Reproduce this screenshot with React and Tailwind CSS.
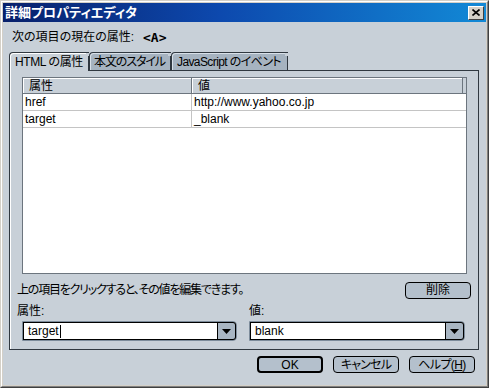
import React from 'react'

const rows = [
  { name: 'href', value: 'http://www.yahoo.co.jp' },
  { name: 'target', value: '_blank' },
]

const Caret = () => (
  <svg width="9" height="5" viewBox="0 0 9 5">
    <path d="M0 0h9L4.5 5z" fill="#000" />
  </svg>
)

const Combo = ({ value, cursor, className }) => (
  <div className={`flex h-[20px] rounded-r-[4px] border border-[#7d8c9b] bg-[#c8d0d8] ${className}`}>
    <div className="flex-1 flex items-center bg-white border border-black pl-[4px] text-[12px] leading-none">
      {value}
      {cursor && <span className="w-px h-[13px] bg-black ml-px" />}
    </div>
    <div className="w-[18px] flex items-center justify-center bg-[#a9b6c3] border-y border-r border-black rounded-r-[3px]">
      <Caret />
    </div>
  </div>
)

const Button = ({ children, primary, className = '' }) => (
  <button
    className={`h-[17px] w-[66px] rounded-[4px] bg-[#b4c0cc] text-[12px] leading-none flex items-center justify-center whitespace-nowrap ${
      primary ? 'border-2 border-black' : 'border border-black'
    } ${className}`}
  >
    {children}
  </button>
)

const Tab = ({ label, active, width, className = '' }) => (
  <div
    className={`relative flex items-center text-[12px] leading-none whitespace-nowrap rounded-tl-[4px] border-l border-t border-[#303840] ${width} ${className} ${
      active
        ? 'bg-[#c8d0d8] z-10 h-[19px] -mb-px shadow-[inset_1px_1px_0_#ffffff]'
        : 'bg-[#a6b3c0] h-[18px] shadow-[inset_1px_1px_0_#d8e0e8]'
    }`}
  >
    {label}
    <div className="absolute right-0 top-[3px] bottom-0 w-px bg-[#303840]" />
    <div className="absolute right-0 top-0 w-[3px] h-[3px] bg-[#c8d0d8]" />
  </div>
)

export default function App() {
  return (
    <div className="w-[489px] h-[388px] border border-t-[#d4d0c8] border-l-[#d4d0c8] border-r-[#404040] border-b-[#404040] bg-[#d4d0c8] font-['Liberation_Sans','Noto_Sans_CJK_JP',sans-serif] [font-feature-settings:'palt'] text-black">
      <div className="h-full flex flex-col border border-t-white border-l-white border-r-[#808080] border-b-[#808080] p-px">
        {/* Title bar */}
        <div className="h-[19px] shrink-0 flex items-center justify-between pl-[2px] pr-[2px] bg-[linear-gradient(90deg,#08206b_0%,#0d49ae_45%,#1289d6_100%)]">
          <span className="text-white text-[13px] font-bold leading-none">詳細プロパティエディタ</span>
          <div className="w-[16px] h-[14px] bg-[#d4d0c8] border border-t-white border-l-white border-r-[#404040] border-b-[#404040] flex items-center justify-center">
            <svg width="8" height="7" viewBox="0 0 8 7">
              <path d="M0.5 0.5l7 6M7.5 0.5l-7 6" stroke="#000" strokeWidth="1.6" />
            </svg>
          </div>
        </div>

        {/* Body */}
        <div className="flex-1 flex flex-col bg-[#c8d0d8]">
          <div className="h-[14px] mt-[8px] ml-[9px] flex items-center text-[12px] leading-none">
            <span>次の項目の現在の属性:</span>
            <span className="ml-[9px] font-['DejaVu_Sans_Mono',monospace] font-bold text-[13px]">&lt;A&gt;</span>
          </div>

          <div className="mt-[8px] ml-[6px] flex items-end">
            <Tab label="HTML の属性" active width="w-[80px]" className="pl-[5px] tracking-[-0.4px]" />
            <Tab label="本文のスタイル" width="w-[82px]" className="pl-[4px] tracking-[-1.1px]" />
            <Tab label="JavaScript のイベント" width="w-[117px]" className="pl-[5px] tracking-[-0.6px]" />
          </div>

          <div className="ml-[6px] w-[470px] h-[280px] border border-[#303840] shadow-[inset_1px_0_0_#ffffff] px-[7px] pt-[6px] flex flex-col">
            <div className="ml-[5px] w-[445px] h-[197px] bg-white border border-[#6c757e] flex flex-col text-[12px] leading-none">
              <div className="flex h-[16px] bg-[#c8d0d8] border-b border-[#6c757e]">
                <div className="w-[169px] pl-[6px] flex items-center border-r border-[#6c757e] shadow-[inset_1px_1px_0_#ffffff]">属性</div>
                <div className="flex-1 pl-[6px] flex items-center shadow-[inset_1px_1px_0_#ffffff]">値</div>
                <div className="w-[4px] bg-[#c8d0d8] border-l border-[#6c757e]" />
              </div>
              {rows.map((r) => (
                <div key={r.name} className="flex h-[17px] border-b border-[#c4c4c4]">
                  <div className="w-[169px] pl-[2px] flex items-center border-r border-[#c4c4c4]">{r.name}</div>
                  <div className="flex-1 pl-[2px] flex items-center">{r.value}</div>
                </div>
              ))}
            </div>

            <div className="mt-[8px] h-[16px] flex items-center justify-between text-[12px] leading-none">
              <span className="tracking-[-1.2px]">上の項目をクリックすると、その値を編集できます。</span>
              <Button className="w-[65px] h-[16px]">削除</Button>
            </div>

            <div className="mt-[6px] flex text-[12px] leading-none">
              <div className="w-[232px] flex flex-col">
                <span className="h-[14px] flex items-center">属性:</span>
                <Combo value="target" cursor className="mt-[3px] ml-[5px] w-[215px]" />
              </div>
              <div className="flex flex-col">
                <span className="h-[14px] flex items-center">値:</span>
                <Combo value="blank" className="mt-[3px] w-[216px]" />
              </div>
            </div>
          </div>

          <div className="mt-[6px] mr-[11px] flex justify-end gap-[10px]">
            <Button primary>OK</Button>
            <Button className="tracking-[-0.8px]">キャンセル</Button>
            <Button className="tracking-[-0.6px]">
              ヘルプ(<span className="underline">H</span>)
            </Button>
          </div>
        </div>
      </div>
    </div>
  )
}
